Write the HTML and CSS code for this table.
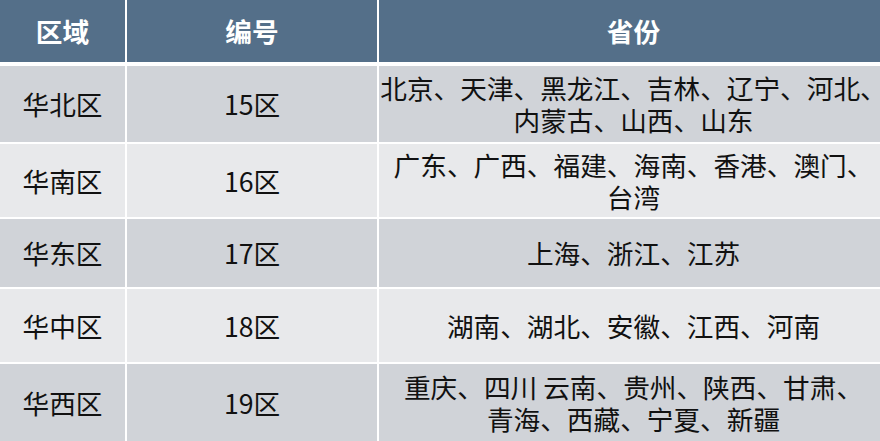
FILE: index.html
```html
<!DOCTYPE html>
<html lang="zh-CN">
<head>
<meta charset="utf-8">
<title>区域表</title>
<link rel="stylesheet" href="styles.css">
</head>
<body>
<div class="table">
  <div class="row head">
    <div class="cell">区域</div>
    <div class="cell">编号</div>
    <div class="cell">省份</div>
  </div>
  <div class="row dark r1">
    <div class="cell">华北区</div>
    <div class="cell">15区</div>
    <div class="cell"><p class="lines">北京、天津、黑龙江、吉林、辽宁、河北、<br>内蒙古、山西、山东</p></div>
  </div>
  <div class="row light r2">
    <div class="cell">华南区</div>
    <div class="cell">16区</div>
    <div class="cell"><p class="lines">广东、广西、福建、海南、香港、澳门、<br>台湾</p></div>
  </div>
  <div class="row dark r3">
    <div class="cell">华东区</div>
    <div class="cell">17区</div>
    <div class="cell"><p class="lines">上海、浙江、江苏</p></div>
  </div>
  <div class="row light r4">
    <div class="cell">华中区</div>
    <div class="cell">18区</div>
    <div class="cell"><p class="lines">湖南、湖北、安徽、江西、河南</p></div>
  </div>
  <div class="row dark r5">
    <div class="cell">华西区</div>
    <div class="cell">19区</div>
    <div class="cell"><p class="lines">重庆、四川 云南、贵州、陕西、甘肃、<br>青海、西藏、宁夏、新疆</p></div>
  </div>
</div>
</body>
</html>
```
FILE: styles.css
```css
html, body {
  margin: 0;
  padding: 0;
  background: #ffffff;
  overflow: hidden;
}
body {
  width: 880px;
  height: 441px;
}
.table {
  width: 888px;
  display: flex;
  flex-direction: column;
  gap: 2px;
  background: #ffffff;
  font-family: "Noto Sans CJK SC", "Noto Sans", sans-serif;
  font-size: 26.67px;
  line-height: 32px;
  color: #111111;
}
.row {
  display: grid;
  grid-template-columns: 125px 250px 509px;
  column-gap: 2px;
}
.cell {
  display: flex;
  align-items: center;
  justify-content: center;
  text-align: center;
}
.lines {
  margin: 0;
  white-space: nowrap;
  text-align: center;
}
.head {
  height: 62px;
  margin-bottom: 2px;
}
.head .cell {
  background: #546f89;
  color: #ffffff;
  font-weight: bold;
}
.dark .cell { background: #d0d3d8; }
.light .cell { background: #e8e9eb; }
.r1 { height: 76px; }
.r2 { height: 73px; }
.r3 { height: 68px; }
.r4 { height: 73px; }
.r5 { height: 77px; }
```
